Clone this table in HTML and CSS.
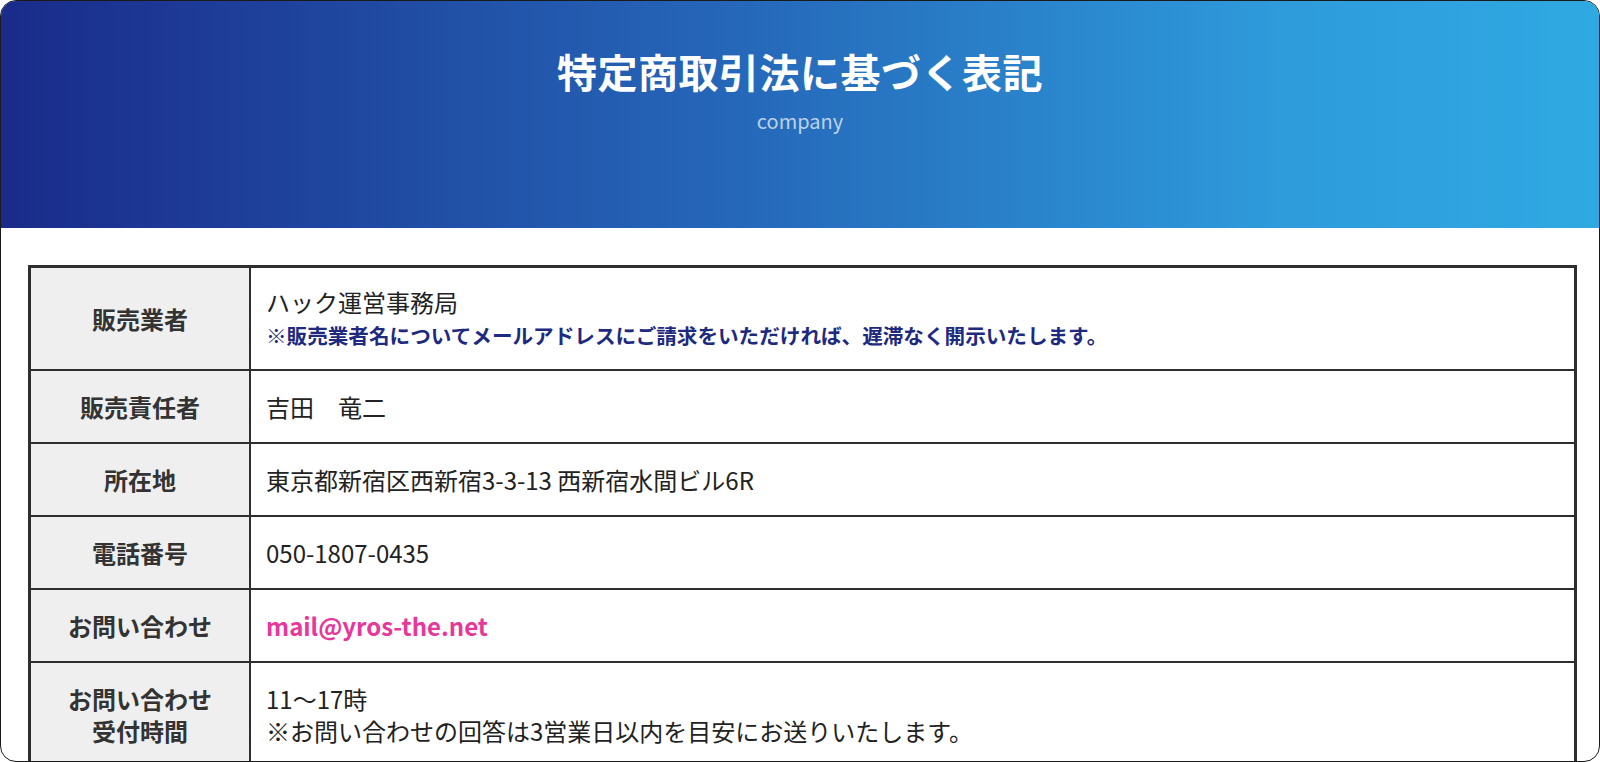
FILE: index.html
```html
<!DOCTYPE html>
<html lang="ja">
<head>
<meta charset="utf-8">
<title>特定商取引法に基づく表記</title>
<link rel="stylesheet" href="styles.css">
</head>
<body>
<div class="frame">
  <header class="hero">
    <h1 class="hero-title">特定商取引法に基づく表記</h1>
    <p class="hero-sub">company</p>
  </header>
  <main class="content">
    <table class="law-table">
      <tbody>
        <tr>
          <th class="label label-tall">販売業者</th>
          <td class="value value-tall">ハック運営事務局<br><span class="note">※販売業者名についてメールアドレスにご請求をいただければ、遅滞なく開示いたします。</span></td>
        </tr>
        <tr>
          <th class="label">販売責任者</th>
          <td class="value">吉田　竜二</td>
        </tr>
        <tr>
          <th class="label">所在地</th>
          <td class="value">東京都新宿区西新宿3-3-13 西新宿水間ビル6R</td>
        </tr>
        <tr>
          <th class="label">電話番号</th>
          <td class="value">050-1807-0435</td>
        </tr>
        <tr>
          <th class="label">お問い合わせ</th>
          <td class="value"><a class="mail" href="#">mail@yros-the.net</a></td>
        </tr>
        <tr>
          <th class="label">お問い合わせ<br>受付時間</th>
          <td class="value">11〜17時<br>※お問い合わせの回答は3営業日以内を目安にお送りいたします。</td>
        </tr>
      </tbody>
    </table>
  </main>
</div>
</body>
</html>
```

FILE: styles.css
```css
html, body {
  margin: 0;
  padding: 0;
  background: #ffffff;
}

body {
  font-family: "Noto Sans CJK JP", "Noto Sans", sans-serif;
  color: #222222;
}

.frame {
  box-sizing: border-box;
  height: 762px;
  border: 1px solid #1a1a1a;
  border-radius: 16px;
  overflow: hidden;
  background: #ffffff;
}

.hero {
  height: 227px;
  background: linear-gradient(90deg, #1a2b8a 0%, #2566b8 45%, #2e9bdb 80%, #2fa9e2 100%);
  text-align: center;
  color: #ffffff;
  padding-top: 41px;
  box-sizing: border-box;
}

.hero-title {
  margin: 0;
  font-size: 40px;
  line-height: 58px;
  font-weight: 700;
  letter-spacing: 0.5px;
}

.hero-sub {
  margin: 6px 0 0;
  font-size: 20px;
  line-height: 30px;
  color: rgba(255, 255, 255, 0.7);
}

.content {
  padding: 37px 22px 0 27px;
}

.law-table {
  width: 100%;
  border-collapse: collapse;
  border: 3px solid #2e2e2e;
}

.law-table th,
.law-table td {
  border: 2px solid #2e2e2e;
  font-size: 24px;
  line-height: 32px;
  padding: 20px 15px 19px;
  vertical-align: middle;
}

.law-table .label-tall,
.law-table .value-tall {
  padding-top: 18px;
  padding-bottom: 18px;
}

.label {
  width: 188px;
  background: #efefef;
  font-weight: 700;
  color: #333333;
  text-align: center;
}

.value {
  text-align: left;
  font-weight: 400;
  color: #222222;
}

.note {
  font-size: 20.6px;
  font-weight: 700;
  color: #1d2a80;
}

.mail {
  color: #e8379b;
  font-weight: 700;
  text-decoration: none;
}
```
